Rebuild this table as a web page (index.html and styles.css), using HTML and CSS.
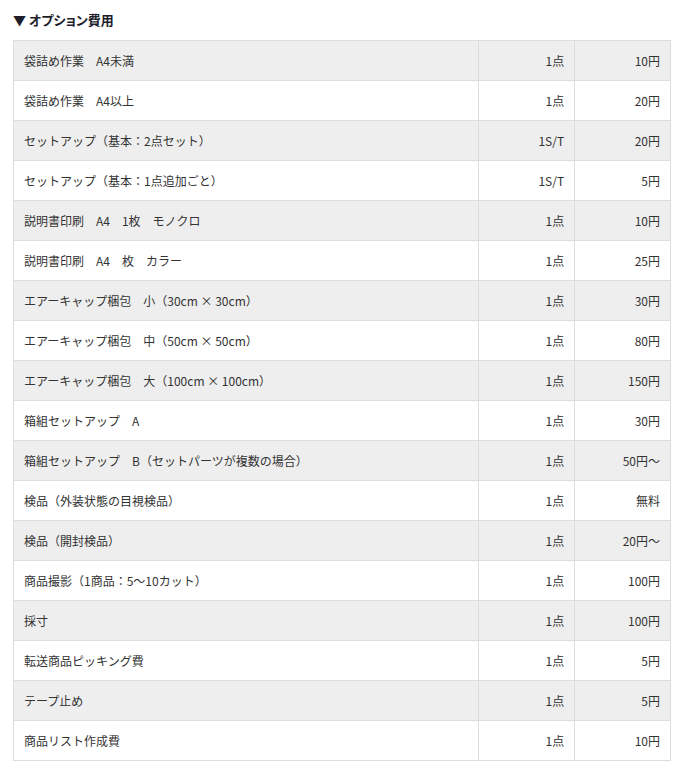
FILE: index.html
```html
<!DOCTYPE html>
<html lang="ja">
<head>
<meta charset="utf-8">
<title>オプション費用</title>
<link rel="stylesheet" href="styles.css">
</head>
<body>
<div class="page">
  <h2 class="title"><span class="arrow">▼</span>オプション費用</h2>
  <table class="price-table">
    <colgroup>
      <col class="c-name">
      <col class="c-unit">
      <col class="c-price">
    </colgroup>
    <tbody>
      <tr><td>袋詰め作業　A4未満</td><td class="r">1点</td><td class="r">10円</td></tr>
      <tr><td>袋詰め作業　A4以上</td><td class="r">1点</td><td class="r">20円</td></tr>
      <tr><td>セットアップ（基本：2点セット）</td><td class="r">1S/T</td><td class="r">20円</td></tr>
      <tr><td>セットアップ（基本：1点追加ごと）</td><td class="r">1S/T</td><td class="r">5円</td></tr>
      <tr><td>説明書印刷　A4　1枚　モノクロ</td><td class="r">1点</td><td class="r">10円</td></tr>
      <tr><td>説明書印刷　A4　枚　カラー</td><td class="r">1点</td><td class="r">25円</td></tr>
      <tr><td>エアーキャップ梱包　小（30cm × 30cm）</td><td class="r">1点</td><td class="r">30円</td></tr>
      <tr><td>エアーキャップ梱包　中（50cm × 50cm）</td><td class="r">1点</td><td class="r">80円</td></tr>
      <tr><td>エアーキャップ梱包　大（100cm × 100cm）</td><td class="r">1点</td><td class="r">150円</td></tr>
      <tr><td>箱組セットアップ　A</td><td class="r">1点</td><td class="r">30円</td></tr>
      <tr><td>箱組セットアップ　B（セットパーツが複数の場合）</td><td class="r">1点</td><td class="r">50円～</td></tr>
      <tr><td>検品（外装状態の目視検品）</td><td class="r">1点</td><td class="r">無料</td></tr>
      <tr><td>検品（開封検品）</td><td class="r">1点</td><td class="r">20円～</td></tr>
      <tr><td>商品撮影（1商品：5～10カット）</td><td class="r">1点</td><td class="r">100円</td></tr>
      <tr><td>採寸</td><td class="r">1点</td><td class="r">100円</td></tr>
      <tr><td>転送商品ピッキング費</td><td class="r">1点</td><td class="r">5円</td></tr>
      <tr><td>テープ止め</td><td class="r">1点</td><td class="r">5円</td></tr>
      <tr><td>商品リスト作成費</td><td class="r">1点</td><td class="r">10円</td></tr>
    </tbody>
  </table>
</div>
</body>
</html>
```
FILE: styles.css
```css
html, body {
  margin: 0;
  padding: 0;
  background: #fff;
}
.page {
  padding: 10px 13px;
  font-family: "Noto Sans CJK JP", "Noto Sans", sans-serif;
  color: #333;
}
.title {
  margin: 0 0 10px;
  font-size: 13px;
  line-height: 20px;
  font-weight: bold;
  color: #1e1e2a;
  font-feature-settings: "palt";
}
.arrow {
  margin-right: 3px;
}
.price-table {
  width: 658px;
  border-collapse: collapse;
  border: 1px solid #ddd;
  font-size: 12px;
  font-weight: normal;
  color: #333;
}
.c-name { width: 466px; }
.c-unit { width: 96px; }
.c-price { width: 96px; }
.price-table td {
  border: 1px solid #ddd;
  height: 40px;
  padding: 0 10px;
  box-sizing: border-box;
  line-height: 16px;
  vertical-align: middle;
  white-space: nowrap;
}
.price-table tr:nth-child(odd) td {
  background: #eee;
}
.price-table td.r {
  text-align: right;
}
```
